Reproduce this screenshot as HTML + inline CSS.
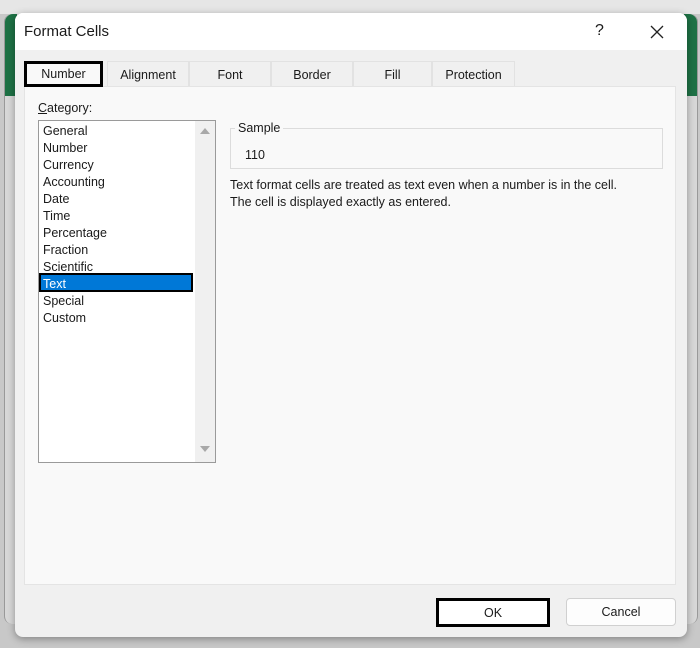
<!DOCTYPE html>
<html><head><style>
*{box-sizing:border-box;margin:0;padding:0}
body{width:700px;height:648px;background:#c8c8c8;position:relative;overflow:hidden;font-family:"Liberation Sans",sans-serif;font-size:12.5px;color:#1a1a1a}
.abs{position:absolute}
</style></head><body>
<div class="abs" style="left:0;top:0;width:700px;height:14px;background:#e6e6e6"></div>
<div class="abs" style="left:4px;top:14px;width:14px;height:610px;background:#d8d8d8;border-radius:8px 0 0 8px;border-left:1px solid #999"></div>
<div class="abs" style="left:5px;top:14px;width:12px;height:82px;background:#1e7145;border-radius:8px 0 0 0"></div>
<div class="abs" style="left:684px;top:14px;width:14px;height:610px;background:#d8d8d8;border-radius:0 8px 8px 0;border-right:1px solid #999"></div>
<div class="abs" style="left:684px;top:14px;width:13px;height:82px;background:#1e7145;border-radius:0 8px 0 0"></div>
<div class="abs" style="left:15px;top:13px;width:672px;height:624px;background:#f0f0f0;border-radius:8px;box-shadow:0 2px 8px rgba(0,0,0,.35);overflow:hidden">
 <div class="abs" style="left:0;top:0;width:672px;height:37px;background:#fff"></div>
 <div class="abs" style="left:9px;top:10px;font-size:15px">Format Cells</div>
 <div class="abs" style="left:580px;top:9px;font-size:16px">?</div>
 <svg class="abs" style="left:635px;top:12px" width="14" height="14"><path d="M1 1L13 13M13 1L1 13" stroke="#222" stroke-width="1.3"/></svg>
 <div class="abs" style="left:92px;top:48px;width:82px;height:25px;border:1px solid #e2e2e2;border-bottom:none;background:#f0f0f0;text-align:center;line-height:26px">Alignment</div>
 <div class="abs" style="left:174px;top:48px;width:82px;height:25px;border:1px solid #e2e2e2;border-bottom:none;text-align:center;line-height:26px">Font</div>
 <div class="abs" style="left:256px;top:48px;width:82px;height:25px;border:1px solid #e2e2e2;border-bottom:none;text-align:center;line-height:26px">Border</div>
 <div class="abs" style="left:338px;top:48px;width:79px;height:25px;border:1px solid #e2e2e2;border-bottom:none;text-align:center;line-height:26px">Fill</div>
 <div class="abs" style="left:417px;top:48px;width:83px;height:25px;border:1px solid #e2e2e2;border-bottom:none;text-align:center;line-height:26px">Protection</div>
 <div class="abs" style="left:9px;top:73px;width:652px;height:499px;background:#f9f9f9;border:1px solid #e4e4e4"></div>
 <div class="abs" style="left:9px;top:48px;width:79px;height:26px;background:#f9f9f9;border:3px solid #000;text-align:center;line-height:21px">Number</div>
 <div class="abs" style="left:23px;top:88px"><u>C</u>ategory:</div>
 <div class="abs" style="left:23px;top:107px;width:178px;height:343px;background:#fff;border:1px solid #9a9a9a"></div>
 <div class="abs" style="left:180px;top:108px;width:20px;height:341px;background:#f0f0f0"></div>
 <svg class="abs" style="left:184px;top:114px" width="12" height="8"><path d="M1 7L6 1L11 7Z" fill="#a8a8a8"/></svg>
 <svg class="abs" style="left:184px;top:432px" width="12" height="8"><path d="M1 1L6 7L11 1Z" fill="#a8a8a8"/></svg>
 <div class="abs" style="left:24px;top:260px;width:154px;height:19px;background:#0078d7;border:2px solid #000"></div>
 <div class="abs" style="left:28px;top:110px;line-height:17px">General<br>Number<br>Currency<br>Accounting<br>Date<br>Time<br>Percentage<br>Fraction<br>Scientific<br><span style="color:#fff">Text</span><br>Special<br>Custom</div>
 <div class="abs" style="left:215px;top:115px;width:433px;height:41px;border:1px solid #dcdcdc"></div>
 <div class="abs" style="left:220px;top:108px;background:#f9f9f9;padding:0 3px">Sample</div>
 <div class="abs" style="left:230px;top:135px">110</div>
 <div class="abs" style="left:215px;top:164px;line-height:17px">Text format cells are treated as text even when a number is in the cell.<br>The cell is displayed exactly as entered.</div>
 <div class="abs" style="left:421px;top:585px;width:114px;height:29px;background:#fff;border:3px solid #000;text-align:center;line-height:24px">OK</div>
 <div class="abs" style="left:551px;top:585px;width:110px;height:28px;background:#fdfdfd;border:1px solid #d0d0d0;border-radius:4px;text-align:center;line-height:27px">Cancel</div>
</div>
</body></html>
